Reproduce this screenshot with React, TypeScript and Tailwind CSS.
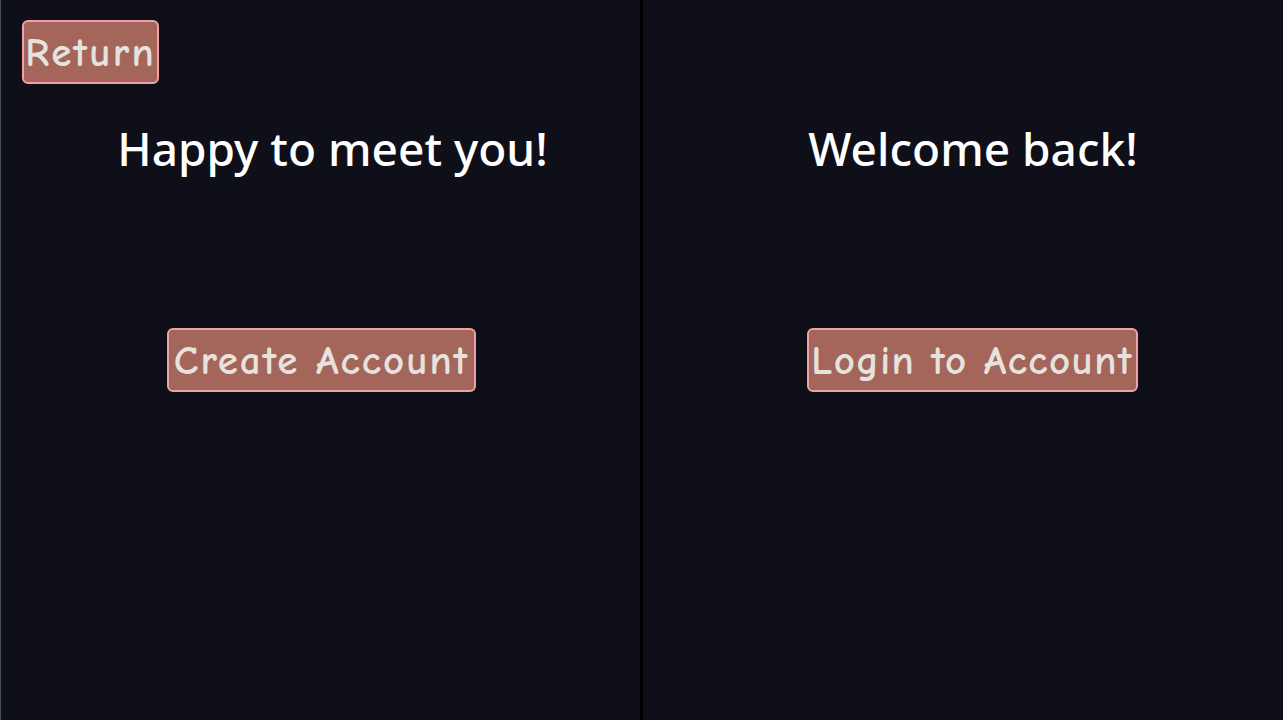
import React from "react";

const btnFont = { fontFamily: '"Comic Sans MS", "Comic Neue", "Chalkboard SE", cursive' };

const btnCls =
  "h-[64px] rounded-[6px] border-2 border-[#f3a0aa] bg-[#a4655b] text-[#e6e2de] text-[41px] font-bold leading-none flex items-center justify-center whitespace-nowrap";

export default function App() {
  return (
    <div className="w-[1283px] h-[720px] bg-[#0e0f18] flex overflow-hidden" style={{ fontFamily: '"Noto Sans", "Open Sans", sans-serif' }}>
      <div className="w-[1px] h-full bg-[#4a4d56]" />
      <div className="w-[639px] h-full flex flex-col relative">
        <div className="pl-[21px] pt-[20px]">
          <button className={`w-[137px] tracking-[2.2px] ${btnCls}`} style={btnFont}>
            Return
          </button>
        </div>
        <h1 className="mt-[34px] ml-[24px] text-center text-white text-[46px] font-medium leading-[60px]">
          Happy to meet you!
        </h1>
        <div className="mt-[150px] flex justify-center ml-[2px]">
          <button className={`w-[309px] tracking-[2px] ${btnCls}`} style={btnFont}>
            Create Account
          </button>
        </div>
      </div>
      <div className="w-[3px] h-full bg-black" />
      <div className="w-[640px] h-full flex flex-col">
        <h1 className="mt-[118px] ml-[20px] text-center text-white text-[46px] font-medium leading-[60px]">
          Welcome back!
        </h1>
        <div className="mt-[150px] flex justify-center ml-[18px]">
          <button className={`w-[331px] tracking-[1.4px] ${btnCls}`} style={btnFont}>
            Login to Account
          </button>
        </div>
      </div>
    </div>
  );
}
